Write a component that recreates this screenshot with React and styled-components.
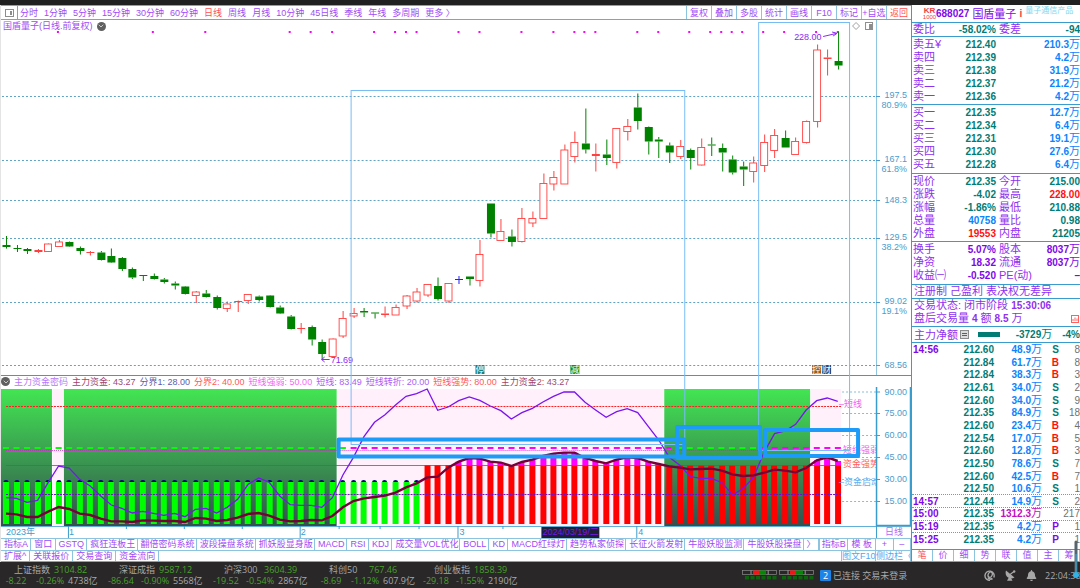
import React from 'react'
import styled, { createGlobalStyle } from 'styled-components'
import { FiChevronDown } from 'react-icons/fi'
import { FaBell } from 'react-icons/fa'

const GlobalStyle = createGlobalStyle`
    *{
        box-sizing:border-box;
    }
    body{
        margin:0;
        background:#fff;
        overflow:hidden;
        font-family:"Liberation Sans", "Noto Sans CJK SC", sans-serif;
        font-size:9px;
        line-height:12px;
        color:#a04cf5;
    }
    button{
        border:0;
        margin:0;
        padding:0;
        background:none;
        font:inherit;
        color:inherit;
        white-space:nowrap;
    }
`

const STEP = 10.54
const cx = (i) => 5 + i * STEP

// [high, body top, body bottom, low, kind]
const candles = [
    [236, 245, 247, 248.6, 'g'], [245, 248, 249, 252, 'g'], [248, 249, 251, 254, 'g'], [249, 250, 252, 253, 'r'],
    [243.5, 244, 251.5, 252, 'r'], [240, 242, 246.5, 247, 'r'], [241.5, 242, 246.5, 247, 'g'], [246.5, 248, 251, 254.5, 'g'],
    [251, 252, 253, 255.5, 'r'], [251, 252.5, 260, 260.5, 'g'], [248.5, 256, 262.5, 263, 'g'], [257, 258, 269, 271, 'g'],
    [267.5, 269, 277.5, 279, 'g'], [275, 275, 276, 281, 'g'], [273.5, 276, 279, 279.5, 'g'], [278, 279.5, 282, 283.5, 'g'],
    [281.5, 283.5, 285.5, 289.5, 'g'], [286, 286.5, 294, 294.5, 'g'], [291, 292, 295.5, 303, 'r'], [290, 293.5, 297, 297.5, 'g'],
    [295.5, 297, 308, 309.5, 'g'], [301.5, 304, 308.5, 312, 'r'], [300.5, 301, 302, 312, 'r'], [294, 294.5, 300.5, 304, 'r'],
    [295.5, 296.5, 300, 301.5, 'g'], [295, 295.5, 307, 307.5, 'g'], [305.5, 307.5, 313.5, 314, 'g'], [315, 316.5, 329, 329.5, 'g'],
    [323, 328, 329, 333.5, 'r'], [325.5, 327, 339.5, 345.5, 'g'], [339.5, 342, 354, 359.5, 'g'], [338.5, 339, 356.5, 357.5, 'r'],
    [311, 318.5, 336, 338, 'r'], [308, 313.5, 316, 318, 'r'], [308, 311, 312.5, 317, 'g'], [312.5, 312.5, 313.5, 318.5, 'g'],
    [306.5, 313.5, 315, 317.5, 'r'], [304.5, 307.5, 315, 315, 'r'], [295, 296, 306, 309, 'r'], [288, 292, 301, 302.5, 'r'],
    [284, 284.5, 295, 297, 'r'], [277.5, 286, 299, 300.5, 'g'], [283, 283.5, 301, 303, 'r'], [276, 279, 280, 284, 'b'],
    [276.5, 276.5, 279, 285.5, 'g'], [240, 254.5, 280.5, 286.5, 'r'], [203.5, 203.5, 233.5, 237.5, 'g'], [219, 231.5, 240.5, 240.5, 'r'],
    [229.5, 236.5, 242, 246.5, 'g'], [208, 218.5, 241.5, 242.5, 'r'], [211.5, 218.5, 223, 227, 'r'], [173.5, 183.5, 218.5, 218.5, 'r'],
    [171, 177.5, 184, 190.5, 'r'], [144.5, 150, 184, 184, 'r'], [131.5, 142.5, 156.5, 162.5, 'r'], [108.5, 143.5, 149.5, 153.5, 'g'],
    [143.5, 154, 156, 171.5, 'r'], [139.5, 154.5, 158, 165, 'g'], [128, 128.5, 162.5, 168.5, 'r'], [119, 126.5, 131.5, 140.5, 'r'],
    [93.5, 107.5, 121, 129.5, 'g'], [126.5, 127, 141.5, 154.5, 'g'], [137, 139.5, 141.5, 158, 'g'], [142.5, 145.5, 152.5, 163, 'g'],
    [140, 146.5, 156.5, 159, 'r'], [148.5, 150, 158, 169.5, 'g'], [138.5, 147.5, 165, 165.5, 'r'], [137.5, 144.5, 145.5, 156, 'g'],
    [143.5, 148, 152.5, 171.5, 'g'], [155.5, 159.5, 172.5, 174.5, 'g'], [161.5, 166.5, 169.5, 186, 'g'], [156.5, 163, 171.5, 182.5, 'r'],
    [134.5, 142.5, 165.5, 172, 'r'], [129, 135.5, 150.5, 158, 'r'], [130.5, 138, 147.5, 147.5, 'g'], [137.5, 141.5, 154.5, 154.5, 'r'],
    [120.5, 121.5, 142.5, 143.5, 'r'], [44.5, 50, 121.5, 127.5, 'r'], [49.5, 57.5, 59, 75.5, 'r'], [31.5, 61, 65.5, 69.5, 'g'],
]

const candleColors = { g: '#008200', r: '#ff4040', b: '#2020ff' }

const signals = [57, 152, 204.5, 289, 310, 331.5, 373.5, 394.5, 405.5, 416, 458, 479, 521, 553, 574, 584, 595, 637, 658, 689, 710, 721, 731.5, 742, 763, 784, 816, 837.7]

const priceLevels = [
    [96.5, '197.5', '80.9%'],
    [160.5, '167.1', '61.8%'],
    [200.5, '148.3'],
    [238.5, '129.5', '38.2%'],
    [302.5, '99.02', '19.1%'],
    [365.5, '68.56'],
]

// thirds of a pixel below the top of the indicator pane
const shortLine = [
    383, 385, 397, 391, 338, 288, 294, 328, 348, 378, 405, 415, 429, 424, 430, 436, 430, 440, 418, 415,
    429, 412, 388, 343, 324, 337, 378, 404, 406, 406, 412, 383, 315, 262, 200, 157, 134, 105, 79, 71,
    57, 121, 111, 92, 81, 91, 108, 122, 147, 128, 115, 96, 79, 66, 66, 97, 120, 142, 125, 116,
    128, 169, 210, 262, 286, 320, 325, 325, 338, 375, 356, 322, 247, 191, 183, 163, 120, 92, 84, 94,
]
const fundLine = [
    431, 433, 441, 441, 425, 411, 417, 431, 435, 446, 454, 454, 456, 451, 452, 453, 453, 456, 444, 446,
    453, 450, 443, 432, 429, 437, 449, 454, 453, 450, 451, 438, 412, 393, 385, 381, 377, 368, 352, 340,
    322, 320, 293, 275, 264, 266, 275, 278, 288, 276, 269, 258, 251, 248, 248, 264, 273, 280, 269, 262,
    264, 275, 282, 289, 293, 298, 297, 296, 302, 313, 318, 316, 308, 299, 302, 307, 294, 271, 262, 273,
]
const toPoints = (line) => line.map((v, i) => `${cx(i)},${370 + v / 3}`).join(' ')

const periods = ['分时', '1分钟', '5分钟', '15分钟', '30分钟', '60分钟', '日线', '周线', '月线', '10分钟', '45日线', '季线', '年线', '多周期', '更多 〉']
const tools = ['复权', '叠加', '多股', '统计', '画线', 'F10', '标记', '+自选', '返回']

const legend = [
    ['主力资金密码', '#a04cf5'],
    ['主力资金: 43.27', '#80003c'],
    ['分界1: 28.00', '#1e1e8c'],
    ['分界2: 40.00', '#ff2020'],
    ['短线强弱: 50.00', '#f032f0'],
    ['短线: 83.49', '#8c28f0'],
    ['短线转折: 20.00', '#8c28f0'],
    ['短线强势: 80.00', '#ff2020'],
    ['主力资金2: 43.27', '#80003c'],
]

const indicators = ['指标A', '窗口', 'GSTQ', '疯狂连板王', '翻倍密码系统', '波段操盘系统', '抓妖股显身版', 'MACD', 'RSI', 'KDJ', '成交量VOL优化', 'BOLL', 'KD', 'MACD红绿灯', '趋势私家侦探', '长征火箭发射', '牛股妖股监测', '牛股妖股操盘', '〉']

const sells = [['卖五', '212.40', '210.3'], ['卖四', '212.39', '4.2'], ['卖三', '212.38', '31.9'], ['卖二', '212.37', '21.2'], ['卖一', '212.36', '4.2']]
const buys = [['买一', '212.35', '12.7'], ['买二', '212.34', '6.4'], ['买三', '212.31', '19.1'], ['买四', '212.30', '27.6'], ['买五', '212.28', '6.4']]

const teal = '#007c74'
const blue = '#0a84ff'
const red = '#ff1010'
const violet = '#8008e8'

const quotes = [
    ['现价', '212.35', teal, '今开', '215.00', teal],
    ['涨跌', '-4.02', teal, '最高', '228.00', red],
    ['涨幅', '-1.86%', teal, '最低', '210.88', teal],
    ['总量', '40758', blue, '量比', '0.98', teal],
    ['外盘', '19553', red, '内盘', '21205', teal],
]
const funds = [
    ['换手', '5.07%', violet, '股本', '8037万', violet],
    ['净资', '18.32', violet, '流通', '8037万', violet],
    ['收益㈠', '-0.520', violet, 'PE(动)', '– ', violet],
]

const ticks = [
    ['14:56', '212.60', '48.9', 'S', '8'], ['', '212.84', '61.7', 'B', '8'], ['', '212.84', '38.3', 'B', '3'],
    ['', '212.61', '34.0', 'S', '2'], ['', '212.60', '34.0', 'S', '9'], ['', '212.35', '84.9', 'S', '18'],
    ['', '212.60', '23.4', 'B', '4'], ['', '212.54', '17.0', 'B', '5'], ['', '212.60', '12.8', 'B', '3'],
    ['', '212.50', '78.6', 'S', '7'], ['', '212.60', '42.5', 'B', '7'], ['', '212.50', '10.6', 'S', '1'],
    ['14:57', '212.44', '14.9', 'S', '2'], ['15:00', '212.35', '1312.3', '', '217'],
    ['15:19', '212.35', '4.2', 'P', '1'], ['15:25', '212.35', '4.2', 'P', '1'],
]
const flagColors = { S: teal, B: red, P: violet }

const markets = [
    ['上证指数', '3104.82', '-8.22', '-0.26%', '4738亿'],
    ['深证成指', '9587.12', '-86.64', '-0.90%', '5568亿'],
    ['沪深300', '3604.39', '-19.52', '-0.54%', '2867亿'],
    ['科创50', '767.46', '-8.69', '-1.12%', '607.9亿'],
    ['创业板指', '1858.39', '-29.18', '-1.55%', '2190亿'],
]

const PriceChart = () => (
    <Chart $height={355} viewBox="0 20 911 355" preserveAspectRatio="none">
        {priceLevels.map(([y]) => (
            <line key={y} x1="1" x2="880" y1={y} y2={y} stroke="#5fa3c4" strokeDasharray="2 2" />
        ))}
        <line x1="876.5" x2="876.5" y1="20" y2="375" stroke="#8cc4e0" />
        {priceLevels.map(([y, price, pct]) => (
            <g key={y} fill="#4a9ccc" fontSize="9" textAnchor="end">
                <line x1="876" x2="880" y1={y} y2={y} stroke="#4a9ccc" />
                <text x="907" y={pct ? y + 2 : y + 3}>{price}</text>
                {pct && <text x="907" y={y + 12}>{pct}</text>}
            </g>
        ))}
        {signals.map((x) => <rect key={x} x={x - 1} y="31" width="2" height="2" fill="#ff00ff" />)}
        {candles.map(([high, top, bottom, low, kind], i) => {
            const color = candleColors[kind]
            const x = Math.round(cx(i)) + 0.5
            const hollow = kind === 'r' && bottom - top > 2
            return (
                <g key={i}>
                    <line x1={x} x2={x} y1={high} y2={top} stroke={color} />
                    <line x1={x} x2={x} y1={bottom} y2={low} stroke={color} />
                    {hollow
                        ? <rect x={x - 4} y={top} width="7" height={bottom - top} fill="#fff" stroke={color} strokeWidth="0.9" />
                        : <rect x={x - 4} y={top} width="8" height={Math.max(1, bottom - top)} fill={color} />}
                </g>
            )
        })}
        <path d="M823 36.500L836 33.500M832 32L837 33.300L833 36" fill="none" stroke="#8c28f0" />
        <text x="794" y="40" fontSize="9" fill="#8c28f0">228.00</text>
        <path d="M329 359.500H321M324 357L321 359.500L324 362" fill="none" stroke="#8c28f0" />
        <text x="330" y="363" fontSize="9" fill="#8c28f0">71.69</text>
        <path d="M856 22.500L859.500 26L856 29.500L852.500 26Z" fill="none" stroke="#a0a0a0" />
        <rect x="865.500" y="22.500" width="7" height="7" fill="none" stroke="#8c8c8c" />
        <rect x="869" y="24" width="3" height="5" fill="#8c8c8c" />
        {[[475, '停', '#178080'], [570, '减', '#159015'], [812, '控', '#9a5a20'], [822, '财', '#204a80']].map(([x, label, color]) => (
            <g key={x}>
                <rect x={x} y="365" width="9" height="9" fill={color} />
                <text x={x} y="373" fontSize="9" fill="#fff">{label}</text>
            </g>
        ))}
    </Chart>
)

const IndicatorChart = () => (
    <Chart $height={139} viewBox="0 387 911 139" preserveAspectRatio="none">
        <defs>
            <linearGradient id="band" x1="0" y1="0" x2="0" y2="1">
                <stop offset="0" stopColor="#42e552" />
                <stop offset="1" stopColor="#33504f" />
            </linearGradient>
            <clipPath id="labels">
                <rect x="836" y="387" width="40" height="139" />
            </clipPath>
        </defs>
        {[392, 413.5, 435.5, 457.5, 479.5, 501.5].map((y, i) => (
            <g key={y}>
                <line x1="842" x2="876" y1={y} y2={y} stroke="#8cbcd4" strokeDasharray="2 2" />
                <line x1="876" x2="880" y1={y} y2={y} stroke="#4a9ccc" />
                <text x="907" y={y + 3} fontSize="9" fill="#4a9ccc" textAnchor="end">{90 - i * 15}.00</text>
            </g>
        ))}
        <rect x="52" y="389" width="11" height="137" fill="#fff0fb" />
        <rect x="337" y="389" width="327" height="137" fill="#fff0fb" />
        <rect x="811" y="389" width="30" height="137" fill="#fff0fb" />
        <rect x="0" y="389" width="51" height="137" fill="url(#band)" />
        <rect x="63" y="389" width="273" height="137" fill="url(#band)" />
        <rect x="664" y="389" width="146" height="137" fill="url(#band)" />
        {fundLine.map((v, i) => {
            const x = Math.round(cx(i))
            if (i < 40) {
                return (
                    <g key={i}>
                        <path d={`M${x - 2.5} 482A2.500 2 0 0 1 ${x + 2.5} 482Z`} fill="#00007c" />
                        <rect x={x - 3} y="482" width="6" height="42" fill="#00ff00" />
                    </g>
                )
            }
            return (
                <g key={i}>
                    {v < 285 && <rect x={x - 3} y={370 + v / 3} width="6" height={95 - v / 3} fill="#ff00ff" />}
                    <rect x={x - 3} y="465" width="6" height="59" fill="#ff0000" />
                </g>
            )
        })}
        <line x1="5" x2="841" y1="406.500" y2="406.500" stroke="#ff2020" strokeDasharray="2 1" />
        <line x1="5" x2="841" y1="450.500" y2="450.500" stroke="#d820d8" strokeOpacity="0.8" strokeDasharray="1 1" />
        <line x1="5" x2="841" y1="494.500" y2="494.500" stroke="#7010c8" strokeDasharray="2 1" />
        <line x1="5" x2="841" y1="465.500" y2="465.500" stroke="#ff2020" strokeWidth="0.8" />
        <g strokeWidth="2" strokeDasharray="6 4.540">
            <line x1="2" x2="346" y1="448" y2="448" stroke="#00ff00" />
            <line x1="350" x2="671" y1="448" y2="448" stroke="#ff00ff" />
            <line x1="676" x2="760" y1="448" y2="448" stroke="#00ff00" />
            <line x1="761" x2="841" y1="448" y2="448" stroke="#ff00ff" />
        </g>
        <polyline points={toPoints(shortLine)} fill="none" stroke="#7a14f0" strokeWidth="1.300" />
        <polyline points={toPoints(fundLine)} fill="none" stroke="#780038" strokeWidth="2.400" />
        <g fontSize="9" clipPath="url(#labels)">
            <text x="839" y="407" fill="#f060f0">–短线</text>
            <text x="843" y="453" fill="#f060f0">短线强弱</text>
            <text x="843" y="467" fill="#ff6060">资金强势</text>
            <text x="839" y="485" fill="#60b0f0">–资金启动</text>
        </g>
        <path d="M876.500 387V525.500H910.500V387" fill="none" stroke="#3a9ccc" strokeWidth="1.500" />
    </Chart>
)

const DateAxis = () => (
    <Chart $height={12} viewBox="0 526 911 12" preserveAspectRatio="none">
        <line x1="0" x2="911" y1="526.500" y2="526.500" stroke="#5fb0d8" />
        {[67.5, 299.5, 457.5, 636.5, 876.5].map((x) => <line key={x} x1={x} x2={x} y1="526" y2="538" stroke="#3a9ccc" />)}
        {[125.5, 183.5, 241.5, 338.5, 379.5, 418.5, 502.5].map((x) => <line key={x} x1={x} x2={x} y1="526" y2="529" stroke="#3a9ccc" />)}
        <g fontSize="9" fill="#3a9ccc">
            <text x="5" y="535">2023年</text>
            <text x="68" y="535">1</text>
            <text x="300" y="535">2</text>
            <text x="459" y="535">3</text>
            <text x="638" y="535">4</text>
        </g>
        <rect x="541" y="527" width="58" height="11" fill="#1c2038" />
        <text x="542" y="535" fontSize="9" fill="#7a18e8">2024/03/19/二</text>
        <text x="885" y="535" fontSize="9" fill="#b466f8">日线</text>
    </Chart>
)

const Annotations = () => (
    <Overlay viewBox="0 20 911 518" preserveAspectRatio="none">
        <g fill="none" stroke="#78bcf4">
            <rect x="350.500" y="90.500" width="334" height="354" />
            <rect x="758.500" y="22.500" width="91" height="428" />
        </g>
        <g fill="none" stroke="#1c9cf8" strokeWidth="4" strokeLinejoin="round">
            <rect x="338" y="439.500" width="346" height="17" />
            <rect x="677" y="427" width="83" height="31" />
            <rect x="765" y="430" width="93" height="26" />
        </g>
    </Overlay>
)

const LedMeter = () => (
    <svg width="74" height="12" viewBox="0 0 74 12">
        {[0, 37].map((x) => (
            <g key={x} transform={`translate(${x} 0)`}>
                {[0.5, 9, 18, 26].map((c) => <rect key={c} x={c} y="1.500" width="8.500" height="4" fill="none" stroke="#8c8c8c" strokeWidth="0.7" />)}
                <rect x="11" y="1.500" width="6" height="4" fill="#ff1010" />
                <rect x="17" y="1.500" width="7" height="4" fill="#008c00" />
                {[3, 8.5, 14, 19.5, 25, 30.5].map((c) => <rect key={c} x={c} y="7" width="4" height="3.500" fill="#0c640c" />)}
            </g>
        ))}
    </svg>
)

const ServiceIcon = () => (
    <svg width="11" height="11" viewBox="0 0 11 11" fill="none" stroke="currentColor">
        <path d="M6 10.300A4.600 4.600 0 1 1 9.800 7.500" strokeWidth="1.400" />
        <ellipse cx="6.200" cy="4.600" rx="2" ry="2.800" transform="rotate(25 6.200 4.600)" strokeWidth="1.300" />
        <path d="M4 7.500C5 9 7 9.500 8.500 8.500" strokeWidth="1.800" />
    </svg>
)

const DishIcon = () => (
    <svg width="11" height="11" viewBox="0 0 11 11" fill="currentColor">
        <path d="M1 0.500L9.500 7.500C6.500 9.300 3 8.500 1.500 6C0.500 4.300 0.300 2.200 1 0.500Z" />
        <path d="M5 4.500L9 1.500" stroke="currentColor" strokeWidth="1.200" />
        <circle cx="9.200" cy="1.500" r="1.200" />
        <path d="M3.500 8L2 10.800H7.500L6 8Z" />
    </svg>
)

const BookTable = ({ rows, marked }) => (
    <Table>
        <tbody>
            {rows.map(([label, price, amount], i) => (
                <tr key={label}>
                    <Name>{label}{marked && i === 0 ? '¥' : ''}</Name>
                    <Value $color={teal}>{price}</Value>
                    <Value $color={blue} colSpan="2">{amount}<Unit>万</Unit></Value>
                </tr>
            ))}
        </tbody>
    </Table>
)

const QuoteTable = ({ rows }) => (
    <Table>
        <tbody>
            {rows.map(([a, av, ac, b, bv, bc]) => (
                <tr key={a}>
                    <Name>{a}</Name>
                    <Value $color={ac}>{av}</Value>
                    <Name $second>{b}</Name>
                    <Value $color={bc}>{bv.replace('万', '')}{bv.endsWith('万') && <Unit>万</Unit>}</Value>
                </tr>
            ))}
        </tbody>
    </Table>
)

const App = () => {
    return (
        <Page>
            <GlobalStyle />
            <TitleStrip />
            <Workspace>
                <Left>
                    <Toolbar>
                        <PanelToggle aria-label="panel">
                            <svg width="9" height="8" viewBox="0 0 9 8">
                                <rect x="0.500" y="0.500" width="8" height="7" fill="none" stroke="#8c8c8c" />
                                <rect x="5" y="2" width="2" height="4" fill="#8c8c8c" />
                            </svg>
                        </PanelToggle>
                        <Periods>
                            {periods.map((p) => <Period key={p} $active={p === '日线'}>{p}</Period>)}
                        </Periods>
                        {tools.map((t) => <Tool key={t} $active={t === '返回'}>{t}</Tool>)}
                    </Toolbar>
                    <ChartArea>
                        <ChartTitle>
                            国盾量子(日线.前复权)
                            <RoundIcon><FiChevronDown /></RoundIcon>
                        </ChartTitle>
                        <PriceChart />
                        <Legend>
                            <RoundIcon><FiChevronDown /></RoundIcon>
                            {legend.map(([text, color]) => <LegendItem key={text} $color={color}>{text}</LegendItem>)}
                        </Legend>
                        <IndicatorChart />
                        <DateAxis />
                        <Annotations />
                    </ChartArea>
                    <TabRow>
                        {indicators.map((t) => <Tab key={t}>{t}</Tab>)}
                        <Spacer />
                        <Tab $first $width={30}>指标B</Tab>
                        <Tab $width={29}>模 板</Tab>
                        <Tab $width={18}>+</Tab>
                        <Tab $width={18}>–</Tab>
                    </TabRow>
                    <TabRow>
                        <Tab>扩展^</Tab>
                        <Tab>关联报价</Tab>
                        <Tab>交易查询</Tab>
                        <Tab>资金流向</Tab>
                        <Spacer />
                        <Tab $first $info $width={35}>图文F10</Tab>
                        <Tab $info $width={35}>侧边栏〈</Tab>
                    </TabRow>
                </Left>
                <Side>
                    <StockHeader>
                        <Rank><span>KR</span><span>1000</span></Rank>
                        <b>688027</b>
                        <StockName>国盾量子</StockName>
                        <Info>i</Info>
                        <Sector>量子通信产品</Sector>
                    </StockHeader>
                    <Group>
                        <QuoteTable rows={[['委比', '-58.02%', teal, '委差', '-94', teal]]} />
                    </Group>
                    <Group $pad="1px 0"><BookTable rows={sells} marked /></Group>
                    <Group $pad="1px 0 2px"><BookTable rows={buys} /></Group>
                    <Group $pad="1px 0"><QuoteTable rows={quotes} /></Group>
                    <Group $pad="1px 0 2px"><QuoteTable rows={funds} /></Group>
                    <Group><Note>注册制 己盈利 表决权无差异</Note></Group>
                    <Group $pad="0 0 1px">
                        <Note>交易状态: 闭市阶段 <b>15:30:06</b></Note>
                        <Note>
                            盘后交易量 <b>4</b> 额 <b>8.5</b>万
                            <Chip>
                                <svg width="8" height="8" viewBox="0 0 8 8">
                                    <rect x="0.500" y="0.500" width="7" height="7" fill="none" stroke="#ff6060" />
                                    <path d="M2 6V4M4 6V2.500M6 6V3.500" stroke="#ff6060" />
                                </svg>
                            </Chip>
                        </Note>
                    </Group>
                    <NetFlow>
                        主力净额
                        <svg width="9" height="9" viewBox="0 0 9 9">
                            <rect x="0.500" y="0.500" width="8" height="8" fill="#ddd" stroke="#8c8c8c" />
                            <path d="M2 3.500H7M2 5.500H7" stroke="#606060" />
                        </svg>
                        <FlowBar />
                        <FlowValue><b>-3729</b>万</FlowValue>
                        <FlowPct>-4%</FlowPct>
                    </NetFlow>
                    <TickTable>
                        <tbody>
                            {ticks.map(([time, price, amount, flag, count], i) => (
                                <TickRow key={i} $dotted={i > 10 && i < 15}>
                                    <TickCell $left $color={violet}>{time}</TickCell>
                                    <TickCell $color={teal}>{price}</TickCell>
                                    <TickCell $color={flag ? blue : '#c010c0'}>{amount}<Unit>万</Unit></TickCell>
                                    <TickCell $color={flagColors[flag]}>{flag}</TickCell>
                                    <TickCell $light $color="#707070">{count}</TickCell>
                                </TickRow>
                            ))}
                        </tbody>
                    </TickTable>
                    <SideTabs>
                        {['笔', '价', '细', '势', '联', '值', '主', '筹'].map((t) => <SideTab key={t} $active={t === '笔'}>{t}</SideTab>)}
                    </SideTabs>
                </Side>
            </Workspace>
            <Footer>
                {markets.map(([name, value, change, pct, amount]) => (
                    <Market key={name}>
                        <MarketTop>
                            <MarketName>{name}</MarketName>
                            <Down>{value}</Down>
                        </MarketTop>
                        <MarketBottom>
                            <Down $center>{change}</Down>
                            <Down>{pct}</Down>
                            <span>{amount}</span>
                        </MarketBottom>
                    </Market>
                ))}
                <Spacer />
                <LedMeter />
                <Badge>2</Badge>
                <Status>已连接 交易未登录</Status>
                <FooterIcons>
                    <ServiceIcon />
                    <DishIcon />
                    <FaBell />
                </FooterIcons>
                <Clock>22:04:38</Clock>
                <Handle>
                    <svg width="8" height="40" viewBox="0 0 8 40">
                        <path d="M4 2V35" stroke="#56646e" strokeWidth="3" strokeLinecap="round" />
                        <path d="M4 14V35" stroke="#30b4e8" />
                        <circle cx="4" cy="35" r="3" fill="#30b4e8" />
                    </svg>
                </Handle>
            </Footer>
        </Page>
    )
}

const Page = styled.div`
    display:flex;
    flex-direction:column;
    min-height:100vh;
`
const TitleStrip = styled.div`
    height:5px;
    background:#202020;
`
const Workspace = styled.main`
    display:flex;
`
const Left = styled.section`
    flex:1;
    min-width:0;
    border-left:1px solid #e4e4e4;
`
const Toolbar = styled.nav`
    display:flex;
    height:15px;
    border-top:1px solid #5fb0d8;
    border-bottom:1px solid #5fb0d8;
`
const PanelToggle = styled.button`
    display:flex;
    align-items:center;
    justify-content:center;
    width:17px;
    border-right:1px solid #5fb0d8;
`
const Periods = styled.div`
    display:flex;
    flex:1;
    gap:6px;
    padding-left:2px;
`
const Period = styled.button`
    color:${({ $active }) => ($active ? '#ff5050' : 'inherit')};
`
const Tool = styled.button`
    width:25px;
    border-left:1px solid #8cc4e0;
    color:${({ $active }) => ($active ? '#ff5050' : 'inherit')};
`
const ChartArea = styled.div`
    position:relative;
`
const Chart = styled.svg`
    display:block;
    width:100%;
    height:${({ $height }) => $height}px;
`
const Overlay = styled.svg`
    position:absolute;
    inset:0;
    width:100%;
    height:100%;
    pointer-events:none;
`
const ChartTitle = styled.div`
    position:absolute;
    left:2px;
    top:0;
    display:flex;
    align-items:center;
    gap:4px;
`
const RoundIcon = styled.span`
    display:flex;
    align-items:center;
    justify-content:center;
    width:9px;
    height:9px;
    border-radius:50%;
    background:#606060;
    color:#fff;
    font-size:8px;
`
const Legend = styled.div`
    display:flex;
    align-items:center;
    gap:4px;
    height:12px;
    border-top:1px solid #3a9ccc;
`
const LegendItem = styled.span`
    color:${({ $color }) => $color};
    opacity:0.75;
    white-space:nowrap;
`
const TabRow = styled.div`
    display:flex;
    height:12px;
    border-top:1px solid #8cc4e0;
    line-height:11px;
    &:last-child{
        border-bottom:1px solid #5fb0d8;
    }
`
const Tab = styled.button`
    padding:0 3px;
    border-right:1px solid #8cc4e0;
    border-left:${({ $first }) => ($first ? '1px solid #8cc4e0' : '0')};
    color:${({ $info }) => ($info ? '#50a8f0' : 'inherit')};
    width:${({ $width }) => ($width ? $width + 'px' : 'auto')};
    ${({ $width }) => $width && 'padding:0;'}
    overflow:hidden;
`
const Spacer = styled.div`
    flex:1;
`
const Side = styled.aside`
    display:flex;
    flex-direction:column;
    width:169px;
    border-left:1px solid #3a9ccc;
    overflow:hidden;
    font-size:10px;
`
const StockHeader = styled.header`
    display:flex;
    align-items:center;
    height:18px;
    padding-left:11px;
    border-bottom:1px solid #3a9ccc;
    white-space:nowrap;
    color:${violet};
`
const Rank = styled.span`
    display:flex;
    flex-direction:column;
    align-items:center;
    width:13px;
    font-size:6px;
    line-height:7px;
    color:#f04040;
    span:first-child{
        font-size:8px;
        font-weight:700;
    }
`
const StockName = styled.span`
    margin-left:3px;
    font-size:11px;
`
const Info = styled.b`
    padding:0 3px;
    color:#f04040;
`
const Sector = styled.span`
    align-self:flex-start;
    font-size:8px;
    color:#7cd8f0;
`
const Group = styled.div`
    padding:${({ $pad }) => $pad || '0'};
    border-bottom:1px solid #3a9ccc;
`
const Table = styled.table`
    width:100%;
    table-layout:fixed;
    border-collapse:collapse;
    td{
        height:13px;
        padding:0;
        line-height:13px;
        white-space:nowrap;
    }
`
const Name = styled.td`
    width:${({ $second }) => ($second ? '33px' : '34px')};
    font-size:11px;
    text-align:left;
    color:#9030f0;
    &&{
        padding-left:${({ $second }) => ($second ? '3px' : '1px')};
    }
`
const Value = styled.td`
    font-weight:700;
    text-align:right;
    color:${({ $color }) => $color};
    &:nth-child(2){
        width:50px;
    }
`
const Unit = styled.span`
    font-size:11px;
    font-weight:400;
`
const Note = styled.div`
    padding-left:2px;
    font-size:11px;
    line-height:13px;
    color:#9030f0;
    white-space:nowrap;
    display:flex;
    gap:3px;
    b{
        font-size:10px;
    }
`
const Chip = styled.span`
    display:flex;
    align-items:center;
    margin-left:auto;
    padding-right:1px;
`
const NetFlow = styled.div`
    display:flex;
    align-items:center;
    gap:2px;
    height:16px;
    padding-left:2px;
    border-bottom:1px solid #3a9ccc;
    font-size:11px;
    color:#9030f0;
    white-space:nowrap;
`
const FlowBar = styled.span`
    width:22px;
    height:5px;
    margin-left:7px;
    background:${teal};
`
const FlowValue = styled.span`
    margin-left:auto;
    color:${teal};
    b{
        font-size:10px;
    }
`
const FlowPct = styled.b`
    padding-left:8px;
    font-size:10px;
    color:${teal};
`
const TickTable = styled.table`
    display:grid;
    flex:1;
    padding-bottom:3px;
    tbody{
        display:grid;
        grid-auto-rows:1fr;
    }
`
const TickRow = styled.tr`
    display:grid;
    grid-template-columns:28px 53px 48px 17px 1fr;
    align-items:center;
    padding-left:1px;
    border-bottom:${({ $dotted }) => ($dotted ? '1px dotted #5fa3c4' : '0')};
`
const TickCell = styled.td`
    padding:0;
    line-height:11px;
    font-weight:${({ $light }) => ($light ? 400 : 700)};
    text-align:${({ $left }) => ($left ? 'left' : 'right')};
    color:${({ $color }) => $color};
    ${Unit}{
        line-height:11px;
    }
`
const SideTabs = styled.div`
    display:grid;
    grid-template-columns:repeat(8, 1fr);
    height:13px;
    border-top:1px solid #3a9ccc;
    border-bottom:1px solid #5fb0d8;
    font-size:9px;
    line-height:11px;
`
const SideTab = styled.button`
    border-right:1px solid #8cc4e0;
    color:${({ $active }) => ($active ? '#ff5050' : 'inherit')};
`
const Footer = styled.footer`
    position:relative;
    display:flex;
    flex:1;
    align-items:center;
    background:#292728;
    color:#a8a8a8;
    font-family:"Open Sans", "Noto Sans CJK SC", sans-serif;
    line-height:11px;
    white-space:nowrap;
    overflow:hidden;
`
const Market = styled.div`
    width:105px;
`
const MarketTop = styled.div`
    display:flex;
    padding-left:14px;
`
const MarketName = styled.span`
    width:40px;
`
const MarketBottom = styled.div`
    display:grid;
    grid-template-columns:32px 28px 1fr;
    gap:4px;
`
const Down = styled.span`
    color:#4aa02c;
    text-align:${({ $center }) => ($center ? 'center' : 'left')};
`
const Badge = styled.span`
    width:11px;
    height:11px;
    margin:0 2px 0 4px;
    border-radius:1px;
    background:#1c84e8;
    color:#fff;
    text-align:center;
`
const Status = styled.span`
    width:151px;
`
const FooterIcons = styled.span`
    display:flex;
    gap:10px;
    font-size:11px;
`
const Clock = styled.time`
    width:35px;
    margin-left:8px;
    overflow:hidden;
`
const Handle = styled.span`
    position:fixed;
    right:0;
    bottom:8px;
    line-height:0;
`

export default App
